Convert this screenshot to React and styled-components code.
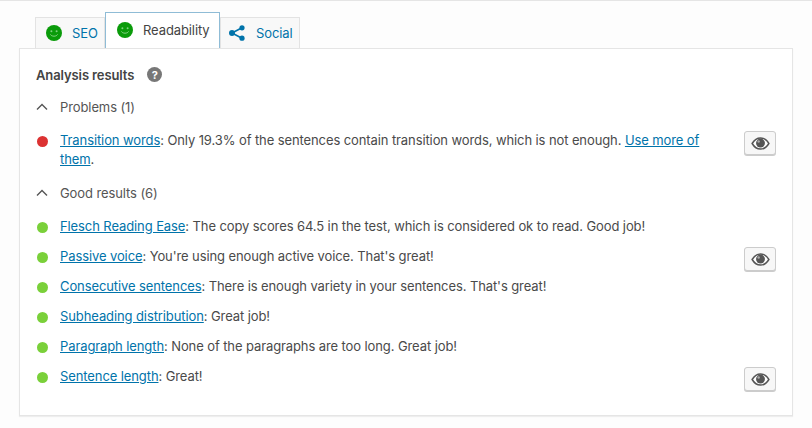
import React from "react";
import styled, { createGlobalStyle } from "styled-components";

const Global = createGlobalStyle`
  html, body { margin: 0; padding: 0; background: #fdfdfd; }
  body { font-family: "Inter", "Liberation Sans", sans-serif; font-size: 13px; color: #4a4a4a; letter-spacing: -0.1px; }
`;
const Page = styled.div`
  width: 812px; height: 428px; box-sizing: border-box; overflow: hidden;
  border-top: 1px solid #e5e5e5; padding: 11px 19px 0;
`;
const Tabs = styled.div`
  display: flex; align-items: flex-end; height: 36px; padding-left: 16px; position: relative; z-index: 1;
`;
const Tab = styled.div`
  box-sizing: border-box; display: flex; align-items: center; gap: ${p => p.$gap || 10}px;
  width: ${p => p.$w}px; height: ${p => (p.$active ? 37 : 32)}px; margin-bottom: -1px;
  padding: ${p => (p.$active ? "0 0 3px 11px" : `0 0 1px ${p.$pad || 10}px`)};
  background: ${p => (p.$active ? "#fff" : "#f8f8f8")};
  border: 1px solid ${p => (p.$active ? "#8fbcd6" : "#e3e3e3")};
  border-bottom: none;
  color: ${p => (p.$active ? "#444" : "#0073aa")};
`;
const Panel = styled.div`
  box-sizing: border-box; width: 774px; height: 368px; background: #fff;
  border: 1px solid #e5e5e5; box-shadow: 0 1px 1px rgba(0,0,0,.06); padding: 17px 16px 0;
  position: relative; z-index: 2;
`;
const TitleRow = styled.div`display: flex; align-items: center; gap: 13px; height: 17px; font-weight: 600; color: #444;`;
const Help = styled.span`
  width: 15px; height: 15px; border-radius: 50%; background: #777; color: #fff; font-size: 11px; font-weight: 700;
  display: flex; align-items: center; justify-content: center;
`;
const GroupHead = styled.div`
  display: flex; align-items: center; gap: 12px; height: 18px; margin-top: ${p => p.$mt}px; color: #555;
`;
const List = styled.div`margin-top: 16px; display: flex; flex-direction: column;`;
const Row = styled.div`display: flex; align-items: flex-start; min-height: 30px; position: relative;`;
const Dot = styled.span`
  flex: none; width: 11px; height: 11px; border-radius: 50%; margin: 4px 12px 0 1px; background: ${p => p.$c};
`;
const Text = styled.div`width: 644px; line-height: 19px; margin-top: -1px;`;
const A = styled.a`color: #0073aa; text-decoration: underline;`;
const EyeBtn = styled.button`
  position: absolute; left: 708px; top: -1px; width: 32px; height: 24px; padding: 0;
  display: flex; align-items: center; justify-content: center;
  background: #f7f7f7; border: 1px solid #ccc; border-radius: 3px; box-shadow: 0 1px 0 #ccc;
`;

const Smile = () => (
  <svg width="16" height="16" viewBox="0 0 16 16">
    <circle cx="8" cy="8" r="8" fill="#0a9b0a" />
    <circle cx="5.4" cy="6.2" r="1" fill="#7fd07f" />
    <circle cx="10.6" cy="6.2" r="1" fill="#7fd07f" />
    <path d="M4.4 9.4c1 2.4 6.2 2.4 7.2 0" fill="none" stroke="#7fd07f" strokeWidth="1" />
  </svg>
);
const Share = () => (
  <svg width="16" height="16" viewBox="0 0 16 16" fill="#0073aa">
    <circle cx="3" cy="8" r="3" /><circle cx="13" cy="2.8" r="2.6" /><circle cx="13" cy="13.2" r="2.6" />
    <path d="M3 8l10-5.2M3 8l10 5.2" stroke="#0073aa" strokeWidth="1.6" />
  </svg>
);
const Chevron = () => (
  <svg width="12" height="8" viewBox="0 0 12 8"><path d="M1 6.500L6 1.500l5 5" fill="none" stroke="#555" strokeWidth="1.400" /></svg>
);
const Eye = () => (
  <svg width="19" height="13" viewBox="0 0 20 14">
    <path d="M1 7c2.400-4 5.400-6 9-6s6.600 2 9 6c-2.400 4-5.400 6-9 6s-6.600-2-9-6z" fill="#fff" stroke="#555" strokeWidth="1.600" />
    <circle cx="10" cy="6.500" r="4.800" fill="#555" />
    <circle cx="8" cy="4.800" r="1.300" fill="#aaa" />
  </svg>
);

const good = [
  ["Flesch Reading Ease", ": The copy scores 64.5 in the test, which is considered ok to read. Good job!"],
  ["Passive voice", ": You're using enough active voice. That's great!", true],
  ["Consecutive sentences", ": There is enough variety in your sentences. That's great!"],
  ["Subheading distribution", ": Great job!"],
  ["Paragraph length", ": None of the paragraphs are too long. Great job!"],
  ["Sentence length", ": Great!", true],
];

export default function App() {
  return (
    <Page>
      <Global />
      <Tabs>
        <Tab $w={70}><Smile /><span>SEO</span></Tab>
        <Tab $w={115} $active><Smile /><span>Readability</span></Tab>
        <Tab $w={80} $gap={11} $pad={8}><Share /><span>Social</span></Tab>
      </Tabs>
      <Panel>
        <TitleRow>Analysis results <Help>?</Help></TitleRow>
        <GroupHead $mt={15}><Chevron />Problems (1)</GroupHead>
        <List>
          <Row>
            <Dot $c="#dc3232" />
            <Text><A>Transition words</A>: Only 19.3% of the sentences contain transition words, which is not enough. <A>Use more of</A> <A>them</A>.</Text>
            <EyeBtn><Eye /></EyeBtn>
          </Row>
        </List>
        <GroupHead $mt={15}><Chevron />Good results (6)</GroupHead>
        <List>
          {good.map(([a, b, eye]) => (
            <Row key={a}>
              <Dot $c="#7ad03a" />
              <Text><A>{a}</A>{b}</Text>
              {eye && <EyeBtn><Eye /></EyeBtn>}
            </Row>
          ))}
        </List>
      </Panel>
    </Page>
  );
}
